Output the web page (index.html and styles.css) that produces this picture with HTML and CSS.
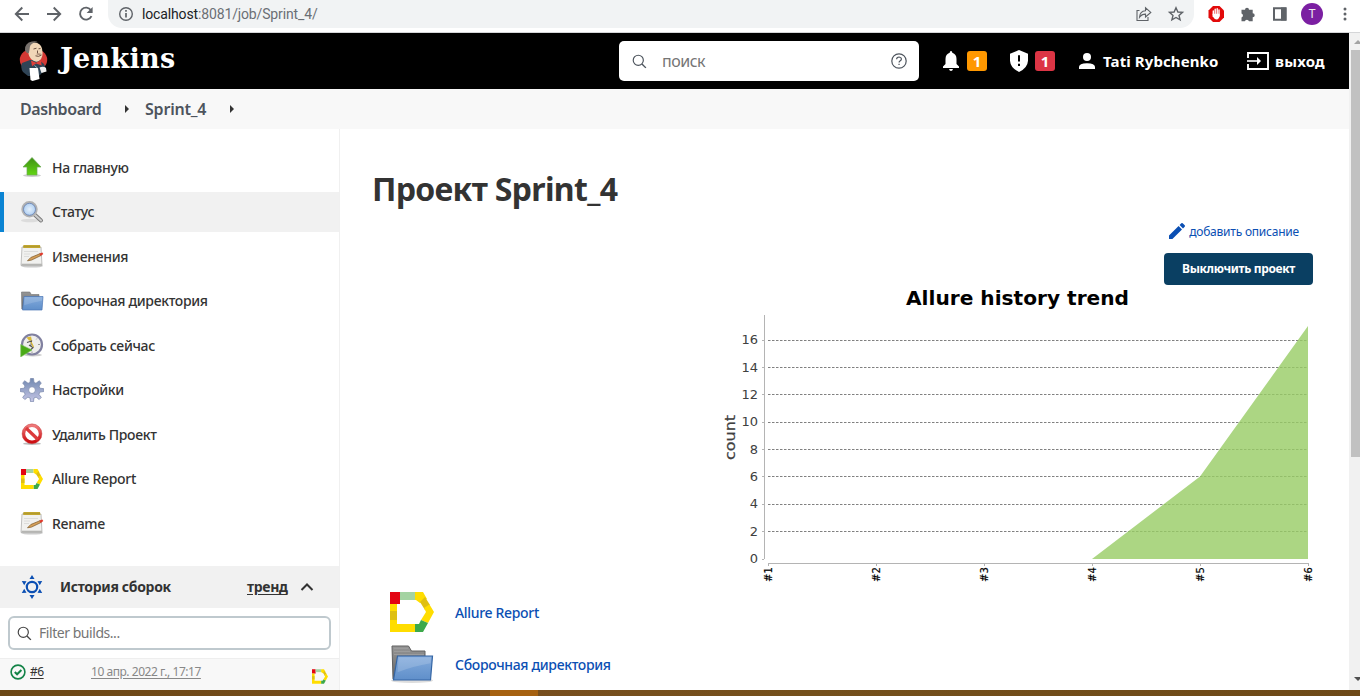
FILE: index.html
```html
<!DOCTYPE html>
<html lang="ru">
<head>
<meta charset="utf-8">
<title>Sprint_4 [Jenkins]</title>
<link rel="stylesheet" href="styles.css">
</head>
<body>
<svg class="defs" width="0" height="0">
  <defs>
    <linearGradient id="green" x1="0" y1="0" x2="0" y2="1"><stop offset="0" stop-color="#3f8f16"/><stop offset="1" stop-color="#62d612"/></linearGradient>
    <linearGradient id="blue" x1="0" y1="0" x2="0" y2="1"><stop offset="0" stop-color="#84abdc"/><stop offset="1" stop-color="#5f8fca"/></linearGradient>
    <linearGradient id="grey" x1="0" y1="0" x2="0" y2="1"><stop offset="0" stop-color="#969696"/><stop offset="1" stop-color="#646464"/></linearGradient>
    <linearGradient id="red" x1="0" y1="0" x2="0" y2="1"><stop offset="0" stop-color="#ee7a7a"/><stop offset="1" stop-color="#cc0c10"/></linearGradient>
    <linearGradient id="gear" x1="0" y1="0" x2="0" y2="1"><stop offset="0" stop-color="#7088b0"/><stop offset="1" stop-color="#c6c6e6"/></linearGradient>
    <radialGradient id="lens"><stop offset="0" stop-color="#e4f0fc"/><stop offset="1" stop-color="#a9cbf0"/></radialGradient>
    <symbol id="notepad" viewBox="0 0 24 24">
      <ellipse cx="12" cy="22" rx="11" ry="1.600" fill="#ccc"/>
      <path d="M2 3h19l1 18.500H1z" fill="#f1f1ef" stroke="#b0b0ae" stroke-width=".8"/>
      <path d="M1.500 20.500h20.400" stroke="#b5b5b2" stroke-width="1.600"/>
      <path d="M3.500 1h16.500l.4 3H3.200z" fill="#c6ab32"/>
      <path d="M3.500 2.500h16.500" stroke="#9c8a2c" stroke-width="1.500" stroke-dasharray="1 1"/>
      <path d="M4 7.500h14M4 10h6M4 12.500h5" stroke="#dcdcda"/>
      <path d="M7.500 16.800l3.300-3.300 9.200-3.800 1 1.800-9.500 4.600z" fill="#d6a05a" stroke="#7a5522" stroke-width=".7"/>
      <path d="M19.500 9.500l2.800-.9 1 1.400-2.600 1.900z" fill="#e03a2c"/>
    </symbol>
    <symbol id="folder" viewBox="0 0 44 38">
      <ellipse cx="22" cy="35.500" rx="21" ry="2.500" fill="#ddd"/>
      <path d="M2 1h16.500l3 5H35v28H3z" fill="url(#grey)" stroke="#606060"/>
      <path d="M4 3.500h14M4 6.500h16M4 9.500h30" stroke="#9c9c9c"/>
      <path d="M7.500 11h35l-2 24H3.500z" fill="url(#blue)" stroke="#3465a4" stroke-width="1.200"/>
      <path d="M8.600 12.300h32.500l-.5 6q-18 3-33 9z" fill="#fff" opacity=".16"/>
    </symbol>
    <symbol id="folder-small" viewBox="0 0 24 24">
      <path d="M1.500 3h8.300l1.500 2.500H19V20H1.800z" fill="url(#grey)" stroke="#707070" stroke-width=".6"/>
      <path d="M4 7.500h19L22 21H2.500z" fill="url(#blue)" stroke="#4a76b4" stroke-width=".7"/>
      <path d="M4.500 8.200h17.800l-.3 3.500q-10 1.500-17.800 4.500z" fill="#fff" opacity=".14"/>
    </symbol>
    <symbol id="allure" viewBox="0 0 44 40">
      <path d="M0 0h10v12H0z" fill="#e30613"/>
      <path d="M10 0h15v8H10z" fill="#a4d3a2"/>
      <path d="M25 0h8l4 7-7 4-4-3h-1z" fill="#ffdd00"/>
      <path d="M30 10l5-5 5 8-5 5z" fill="#e0c010"/>
      <path d="M39.500 12.500L44 20l-6 11-7-3 5-8-2-4z" fill="#ffdd00"/>
      <path d="M31 28l7 3-5 9h-8v-8h4z" fill="#3da94b"/>
      <path d="M0 12h7v20h18v8H0z" fill="#ffdd00"/>
      <path d="M0 19h7v9H0z" fill="#dec013"/>
    </symbol>
    <symbol id="search" viewBox="0 0 16 16"><circle cx="6.700" cy="6.700" r="5.400" fill="none" stroke="currentColor" stroke-width="1.250"/><path d="M10.600 10.600l4.200 4.200" stroke="currentColor" stroke-width="1.500"/></symbol>
  </defs>
</svg>

<div class="browser">
  <svg class="nav" width="84" height="20" viewBox="0 0 84 20" fill="none" stroke="#5f6368" stroke-width="1.900">
    <path d="M15 10H2M8.300 3.500L1.800 10l6.500 6.500M33 10h13M39.700 3.500l6.500 6.500-6.500 6.500"/>
    <path d="M77 6.200a6 6 0 1 0 .5 6"/><path d="M78.600 3v6h-6z" fill="#5f6368" stroke="none"/>
  </svg>
  <div class="address">
    <svg width="16" height="16" viewBox="0 0 16 16" fill="none" stroke="#5f6368" stroke-width="1.400"><circle cx="8" cy="8" r="6.300"/><path d="M8 7v4.500M8 4v1.700" stroke-width="1.700"/></svg>
    <span class="url"><b>localhost</b>:8081/job/Sprint_4/</span>
    <svg class="addr-icons" width="50" height="18" viewBox="0 0 50 18" fill="none" stroke="#5f6368" stroke-width="1.100">
      <path d="M4.500 5.500H2v10h11v-3.500M10.500 2.800v2.900c-4 .2-5.800 3-6 6.600 1.500-2.300 3.200-3.200 6-3.200V12l5.300-4.600z"/>
      <path d="M41 2.800l1.900 4.200 4.600.4-3.500 3 1.100 4.500-4.100-2.400-4.100 2.400 1.100-4.500-3.500-3 4.600-.4z" stroke-width="1.400"/>
    </svg>
  </div>
  <svg class="ext" width="86" height="18" viewBox="0 0 86 18">
    <path d="M6 1h6.500L17 5.500v7L12.500 17H6L1.500 12.500v-7z" fill="#e20a0a"/>
    <path d="M6.300 6v4M8.200 4.200v6M10.200 3.800v6M12 5v6" stroke="#fff" stroke-width="1.400" stroke-linecap="round"/><path d="M5.600 8.800h7v2.300q-.8 3.400-2.800 3.400-2.500 0-4.200-3.200z" fill="#fff"/>
    <path d="M34.500 4.800H38a2 2 0 1 1 4 0h3.700v3.500a2 2 0 1 1 0 4v3.900H42a2.200 2.200 0 0 0-4.200 0h-3.300v-3.800a2.100 2.100 0 0 0 0-4z" fill="#5f6368"/>
    <path d="M67 3.200h11.500v11.500H67z" fill="none" stroke="#5f6368" stroke-width="2"/><path d="M74 2.500h5.500v13H74z" fill="#5f6368"/>
  </svg>
  <span class="avatar">T</span>
  <svg class="dots" width="4" height="14" viewBox="0 0 4 14" fill="#5f6368"><circle cx="2" cy="2" r="1.500"/><circle cx="2" cy="7" r="1.500"/><circle cx="2" cy="12" r="1.500"/></svg>
</div>

<div class="viewport">
  <div class="page">
    <header class="top">
      <svg class="butler" width="30" height="42" viewBox="0 0 30 42">
        <ellipse cx="14.500" cy="20" rx="13.700" ry="11.500" fill="#d33833"/>
        <path d="M4 32q-3-5-1-9l8-3h9l5 4 2 5-5 5-2 2H9z" fill="#2f4456"/>
        <path d="M8.500 8q2-5.500 7-5.500 6 .5 7.500 6 2 9-3 12.500-3 1.500-6-.5-5-3-5.500-12.500z" fill="#f0d6b7"/>
        <path d="M6 10q-.5-7 7-8.500 4-1 6 .8-5-.3-7.500 3-1 2-1 4.500l-.7 3.500Q6.500 13 6 10z" fill="#77716c"/>
        <path d="M14.500 9l3-.8M19.500 8.800l2-.3M16.500 15.800q3 1.500 6-.8M18.500 10.500v3" stroke="#5c4336" fill="none" stroke-width=".9"/>
        <path d="M17 14q2.500-1.500 5.500 0-2 2-5.500 0z" fill="#a88b76"/>
        <path d="M12 20.500l5 2.200 5-2.700.6 5.500L17 23.500l-4 2.700z" fill="#e0403a"/>
        <path d="M10.500 28h8.500l1.500 11-7 2-2-1z" fill="#fff"/><path d="M20.500 27.500q4-1.500 6.500.5l.5 3.500-5 1.500z" fill="#eee"/>
        <path d="M15.500 25.500l3 2.500" stroke="#9cb4c0"/>
      </svg>
      <span class="brand">Jenkins</span>
      <div class="search"><svg class="search-icon" width="15" height="15"><use href="#search"/></svg><span class="search-text">поиск</span>
        <svg width="16" height="16" viewBox="0 0 16 16" fill="none" stroke="#4d545d" stroke-width="1.200"><circle cx="8" cy="8" r="7.200"/><path d="M5.600 6.300q.1-2.300 2.500-2.300 2.200.1 2.300 1.900 0 1.200-1.400 2-.9.500-.9 1.500M8.050 10.800v1.300"/></svg></div>
      <svg class="bell" width="18" height="20" viewBox="0 0 18 20" fill="#fff"><path d="M9 0q1.300 0 1.300 1.700Q14.500 3 14.500 8v5l2.500 2.600V17H1v-1.400L3.500 13V8q0-5 4.200-6.300Q7.700 0 9 0zM7 18h4q-.5 2-2 2t-2-2z"/></svg>
      <span class="badge orange">1</span>
      <svg class="shield" width="20" height="22" viewBox="0 0 20 22"><path d="M10 0l9 3.700v7Q18.500 18 10 22 1.500 18 1 10.700v-7z" fill="#fff"/><path d="M10 5.200v6.300M10 13.700V16" stroke="#000" stroke-width="2"/></svg>
      <span class="badge red">1</span>
      <svg class="person" width="16" height="16" viewBox="0 0 16 16" fill="#fff"><circle cx="8" cy="4" r="4"/><path d="M0 16v-2q0-3.800 8-3.800t8 3.800v2z"/></svg>
      <span class="user">Tati Rybchenko</span>
      <svg class="exit" width="22" height="18" viewBox="0 0 22 18" fill="none" stroke="#fff" stroke-width="1.900"><path d="M1 6V1h20v16H1v-5"/><path d="M0 9h13" stroke-width="1.600"/><path d="M10 5l4 4-4 4z" fill="#fff" stroke="none"/></svg>
      <span class="logout">выход</span>
    </header>
    <nav class="crumbs"><span class="c1">Dashboard</span><i class="tri"></i><span class="c2">Sprint_4</span><i class="tri"></i></nav>
    <div class="body">
      <aside class="side">
        <div class="tasks">
          <a class="task"><svg width="24" height="24" viewBox="0 0 24 24"><ellipse cx="12" cy="20.500" rx="9" ry="1.500" fill="#ccc"/><path d="M12 2.500L21 12h-4v8H7v-8H3z" fill="url(#green)" stroke="#6da957" stroke-width=".7"/></svg><span>На главную</span></a>
          <a class="task active"><svg width="24" height="24" viewBox="0 0 24 24"><ellipse cx="10" cy="20.500" rx="9" ry="1.700" fill="#dcdcdc"/><path d="M14.500 14.500l6.500 6" stroke="#777" stroke-width="4" stroke-linecap="round"/><path d="M14.500 14.500l6.500 6" stroke="#ccc" stroke-width="2.200" stroke-linecap="round"/><circle cx="9.500" cy="9.300" r="7" fill="url(#lens)" stroke="#b2b2b2" stroke-width="2.400"/><circle cx="9.500" cy="9.300" r="6" fill="none" stroke="#6584bd" stroke-width=".8"/></svg><span>Статус</span></a>
          <a class="task"><svg width="24" height="24"><use href="#notepad"/></svg><span>Изменения</span></a>
          <a class="task"><svg width="24" height="24"><use href="#folder-small"/></svg><span>Сборочная директория</span></a>
          <a class="task"><svg width="24" height="24" viewBox="0 0 24 24"><ellipse cx="13" cy="22" rx="9" ry="1.500" fill="#ccc"/><circle cx="12" cy="11.500" r="10" fill="#eeeeec" stroke="#8181a0" stroke-width="2.200"/><path d="M6.500 4.500l4.500-1 1 4.500-3-.5z" fill="#d8b838"/><path d="M7 9.500l4.500-1.500-.5 4.500M9 12l4 2.500-3 3" stroke="#555" stroke-width="1.200" fill="none"/><path d="M11 9l2.500 5" stroke="#d8b838" stroke-width="1.200"/><path d="M20 11.500h-2M12 20v-1.500M17 5.500l-.7.900" stroke="#999"/><path d="M.7 11.500L12 17 .7 24z" fill="#4aaa18" stroke="#83c363" stroke-width=".6"/></svg><span>Собрать сейчас</span></a>
          <a class="task"><svg width="24" height="24" viewBox="0 0 24 24"><path fill-rule="evenodd" d="M10 4.500l.5-4h3l.5 4 2 .8 3.200-2.500 2.100 2.100L19 8l.8 2.200 4 .5v2.800l-4 .6-.9 2.200 2.400 3.100-2.100 2.100-3.100-2.400-2.200.9-.4 3.700h-3l-.4-3.700-2.200-.9-3.100 2.400-2.100-2.100 2.400-3.100-.9-2.200-4-.6v-2.800l4-.5L5 8 2.700 4.900l2.100-2.100L8 5.300zM12 8.700a3.400 3.400 0 1 0 0 6.800 3.400 3.400 0 1 0 0-6.800z" fill="url(#gear)" stroke="#7e8cae" stroke-width=".8"/></svg><span>Настройки</span></a>
          <a class="task"><svg width="24" height="24" viewBox="0 0 24 24"><ellipse cx="12" cy="21.700" rx="9" ry="1.300" fill="#bbb"/><circle cx="12" cy="11.800" r="8.400" fill="#fff" stroke="url(#red)" stroke-width="3.200"/><path d="M6 6l12 11.500" stroke="#dc3a3c" stroke-width="3.200"/><circle cx="12" cy="11.800" r="9.900" fill="none" stroke="#c94648" stroke-width=".5"/></svg><span>Удалить Проект</span></a>
          <a class="task"><svg width="24" height="24" viewBox="0 0 24 24"><use href="#allure" x="1" y="2" width="22" height="20"/></svg><span>Allure Report</span></a>
          <a class="task"><svg width="24" height="24"><use href="#notepad"/></svg><span>Rename</span></a>
        </div>
        <div class="history">
          <svg width="24" height="26" viewBox="0 0 24 26" fill="#0b4fb3"><circle cx="12" cy="13" r="5.200" fill="none" stroke="#0b4fb3" stroke-width="2.200"/><path d="M12 1l2.500 4h-5zM12 25l2.500-4h-5zM1.800 7l4.700.2-2.300 4zM22.200 7l-4.700.2 2.300 4zM1.800 19l4.700-.2-2.300-4zM22.200 19l-4.700-.2 2.300-4z"/></svg>
          <span class="hist-title">История сборок</span><span class="trend">тренд</span>
          <svg class="chev" width="14" height="10" viewBox="0 0 14 10" fill="none" stroke="#333" stroke-width="2"><path d="M1.500 8L7 2.500 12.500 8"/></svg>
        </div>
        <div class="filter"><svg class="filter-icon" width="15" height="15"><use href="#search"/></svg><span class="filter-text">Filter builds...</span></div>
        <div class="build">
          <svg width="16" height="16" viewBox="0 0 16 16" fill="none" stroke="#138347"><circle cx="8" cy="8" r="6.900" stroke-width="1.600"/><path d="M4.800 8l2.300 2.300 4.300-4.300" stroke-width="2"/></svg>
          <span class="num">#6</span><span class="date">10 апр. 2022 г., 17:17</span>
          <svg class="mini" width="16" height="15"><use href="#allure"/></svg>
        </div>
      </aside>
      <main class="main">
        <h1>Проект Sprint_4</h1>
        <div class="desc"><svg width="16" height="16" viewBox="0 0 16 16" fill="#0b4fb3"><path d="M0 12.500L9.600 3l3.400 3.400L3.400 16H0zM10.600 2L12.300.3q.7-.6 1.400 0l2 2q.6.700 0 1.400L14 5.400z"/></svg><span class="desc-text">добавить описание</span></div>
        <div class="disable"><span>Выключить проект</span></div>
        <svg class="chart" width="600" height="304" viewBox="715 285 600 304">
          <text x="906" y="305" class="ch-title" textLength="223" lengthAdjust="spacingAndGlyphs">Allure history trend</text>
          <text transform="translate(735 460) rotate(-90)" class="ch-y" textLength="45" lengthAdjust="spacingAndGlyphs">count</text>
          <g class="grid"><path d="M768 340.500h540M768 367.500h540M768 394.500h540M768 422.500h540M768 449.500h540M768 476.500h540M768 504.500h540M768 531.500h540"/></g>
          <g class="axis"><path d="M764.500 315v244M762 340.500h2M762 367.500h2M762 394.500h2M762 422.500h2M762 449.500h2M762 476.500h2M762 504.500h2M762 531.500h2M762 559.500h2M768 563.500h541M768.500 564v2M876.500 564v2M984.500 564v2M1092.500 564v2M1200.500 564v2M1308.500 564v2"/></g>
          <path d="M1092 559L1200 476.500 1308 326V559z" class="area"/>
          <g class="ch-num" text-anchor="end"><text x="758" y="344">16</text><text x="758" y="372">14</text><text x="758" y="399">12</text><text x="758" y="426">10</text><text x="758" y="454">8</text><text x="758" y="481">6</text><text x="758" y="508">4</text><text x="758" y="536">2</text><text x="758" y="563">0</text></g>
          <g class="ch-cat"><text transform="translate(771.500 582) rotate(-90)">#1</text><text transform="translate(879.500 582) rotate(-90)">#2</text><text transform="translate(987.500 582) rotate(-90)">#3</text><text transform="translate(1095.500 582) rotate(-90)">#4</text><text transform="translate(1203.500 582) rotate(-90)">#5</text><text transform="translate(1311.500 582) rotate(-90)">#6</text></g>
        </svg>
        <div class="links">
          <a class="link"><svg width="44" height="40"><use href="#allure"/></svg><span>Allure Report</span></a>
          <a class="link"><svg width="44" height="38"><use href="#folder"/></svg><span>Сборочная директория</span></a>
        </div>
      </main>
    </div>
  </div>
  <div class="scroll"><i class="up"></i><i class="thumb"></i><i class="down"></i></div>
</div>
<div class="taskbar"><i class="running"></i></div>
</body>
</html>
```
FILE: styles.css
```css
* { box-sizing: border-box; }
body { margin: 0; width: 1360px; height: 696px; overflow: hidden; display: flex; flex-direction: column; background: #fff; color: #333; font-family: "Noto Sans", "Open Sans", sans-serif; font-size: 14px; }
svg { display: block; flex: none; }
span { white-space: nowrap; flex: none; }
.defs { position: absolute; }

.browser { height: 33px; flex: none; border-bottom: 1px solid #d5d6d8; display: flex; align-items: flex-start; }
.nav { margin: 4px 0 0 14px; }
.address { width: 1086px; height: 28px; margin-left: 10px; background: #f1f3f4; border-radius: 0 0 14px 14px; display: flex; align-items: center; padding: 0 9px 0 10px; }
.url { margin-left: 8px; font-family: Roboto, sans-serif; font-size: 14px; color: #6b6f74; letter-spacing: -.14px; }
.url b { font-weight: 400; color: #202124; }
.addr-icons { margin-left: auto; }
.ext { margin: 5px 0 0 13px; }
.avatar { width: 22px; height: 22px; margin: 3px 0 0 8px; border-radius: 50%; background: #7b1fa2; color: #eee; font: 12px/22px Roboto, sans-serif; text-align: center; }
.dots { margin: 7px 0 0 20px; }

.viewport { height: 657px; flex: none; display: flex; }
.page { width: 1349px; display: flex; flex-direction: column; }
.top { height: 56px; flex: none; background: #000; color: #fff; display: flex; align-items: center; font-weight: 700; }
.butler { margin-left: 19px; }
.brand { width: 116px; margin-left: 11px; font: 700 27px/40px "DejaVu Serif", serif; letter-spacing: .3px; padding-bottom: 4px; }
.search { width: 300px; height: 40px; margin-left: 443px; background: #fff; border-radius: 5px; display: flex; align-items: center; justify-content: space-between; padding: 0 12px; color: #4d545d; }
.search-icon { margin-left: 1px; }
.search-text { margin: 0 auto 0 15px; font-size: 16px; font-weight: 400; color: #757575; letter-spacing: -.5px; }
.bell { margin-left: 23px; }
.badge { width: 20px; height: 20px; border-radius: 3px; font-size: 15px; line-height: 20px; text-align: center; }
.orange { background: #ff9800; margin-left: 7px; }
.red { background: #dc3545; margin-left: 6px; }
.shield { margin-left: 22px; }
.person { margin-left: 24px; }
.user { width: 116px; margin-left: 8px; font-size: 15px; letter-spacing: .1px; }
.exit { margin-left: 28px; }
.logout { margin-left: 6px; font-size: 15px; letter-spacing: .2px; }

.crumbs { height: 40px; flex: none; background: #f8f8f8; display: flex; align-items: center; padding-left: 20px; font-size: 16px; font-weight: 600; letter-spacing: -.4px; color: #4d545d; }
.c1 { width: 81px; }
.c2 { width: 61px; margin-left: 16px; letter-spacing: -.2px; }
.tri { border: 4px solid transparent; border-left-color: #333; border-right: 0; margin-left: 24px; }

.body { display: flex; flex: 1; min-height: 0; }
.side { width: 340px; border-right: 1px solid #f0f0f0; display: flex; flex-direction: column; }
.tasks { padding-top: 18px; height: 437px; flex: none; display: flex; flex-direction: column; gap: 4.500px; }
.task { height: 40px; flex: none; display: flex; align-items: center; padding-left: 20px; gap: 8px; font-weight: 500; letter-spacing: -.33px; }
.task.active { background: #f1f1f1; border-left: 4px solid #0b84d3; padding-left: 16px; }
.history { height: 42px; flex: none; background: #f1f1f1; display: flex; align-items: center; padding-left: 20px; font-weight: 700; letter-spacing: -.33px; }
.hist-title { width: 111px; margin-left: 16px; padding-bottom: 2px; }
.trend { width: 40px; margin-left: 76px; padding-bottom: 2px; text-decoration: underline; text-underline-offset: 2px; }
.chev { margin-left: 13px; }
.filter { width: 323px; height: 34px; flex: none; margin: 8px 0 8px 8px; border: 2px solid #bfc9ce; border-radius: 6px; display: flex; align-items: center; padding-left: 7px; color: #444; }
.filter-text { margin-left: 7px; padding-bottom: 1px; color: #757575; letter-spacing: -.45px; }
.build { height: 32px; flex: none; background: #f8f8f8; border-top: 1px solid #eee; display: flex; align-items: center; padding: 0 11px 6px 10px; font-size: 12px; }
.num { margin-left: 4px; width: 14px; letter-spacing: -.5px; text-decoration: underline; text-underline-offset: 2px; }
.date { margin-left: 47px; color: #888; letter-spacing: -.46px; text-decoration: underline; text-underline-offset: 2px; }
.mini { margin: 10px 0 0 auto; }

.main { width: 1009px; display: flex; flex-direction: column; align-items: flex-start; }
h1 { margin: 37px 0 1px 32px; font-size: 32px; line-height: 46px; font-weight: 700; letter-spacing: -.67px; }
.desc { margin: 9px 50px 0 0; height: 18px; align-self: flex-end; display: flex; align-items: center; gap: 4px; font-size: 12px; letter-spacing: -.22px; color: #0b4fb3; }
.disable { margin: 13px 36px 0 0; width: 149px; height: 32px; align-self: flex-end; background: #0a3f62; border-radius: 4px; color: #fff; font-size: 12px; font-weight: 700; letter-spacing: -.35px; line-height: 32px; text-align: center; }
.chart { margin-left: 375px; }
.ch-title { font: 700 20px "DejaVu Sans", sans-serif; fill: #000; }
.ch-y { font: 14px "DejaVu Sans", sans-serif; fill: #404040; stroke: #404040; stroke-width: .2px; }
.grid { stroke: #808080; stroke-dasharray: 2.500 1.500; }
.axis { stroke: #b4b4b4; }
.area { fill: #97cc64; fill-opacity: .8; }
.ch-num { font: 13px "DejaVu Sans", sans-serif; fill: #404040; }
.ch-cat { font: 10px "DejaVu Sans", sans-serif; fill: #000; stroke: #000; stroke-width: .2px; }
.links { margin: 3px 0 0 50px; display: flex; flex-direction: column; gap: 13px; }
.link { display: flex; align-items: center; gap: 21px; color: #0b4fb3; font-weight: 500; letter-spacing: -.33px; }

.scroll { width: 11px; background: #f1f1f1; border-left: 2px solid #f1f1f1; display: flex; flex-direction: column; align-items: flex-start; overflow: hidden; }
.up { border: 4px solid transparent; border-bottom-color: #a3a3a3; border-top: 0; margin: 7px 0 6px 3px; }
.thumb { width: 9px; height: 407px; background: #c1c1c1; }
.down { border: 4px solid transparent; border-top-color: #505050; border-bottom: 0; margin: auto 0 9px 3px; }
.taskbar { height: 6px; flex: none; background: linear-gradient(90deg, #6b4715, #784e1d 35%, #74501c 60%, #6d4917); }
.running { display: block; width: 48px; height: 6px; margin-left: 490px; background: #a66110; }
```
